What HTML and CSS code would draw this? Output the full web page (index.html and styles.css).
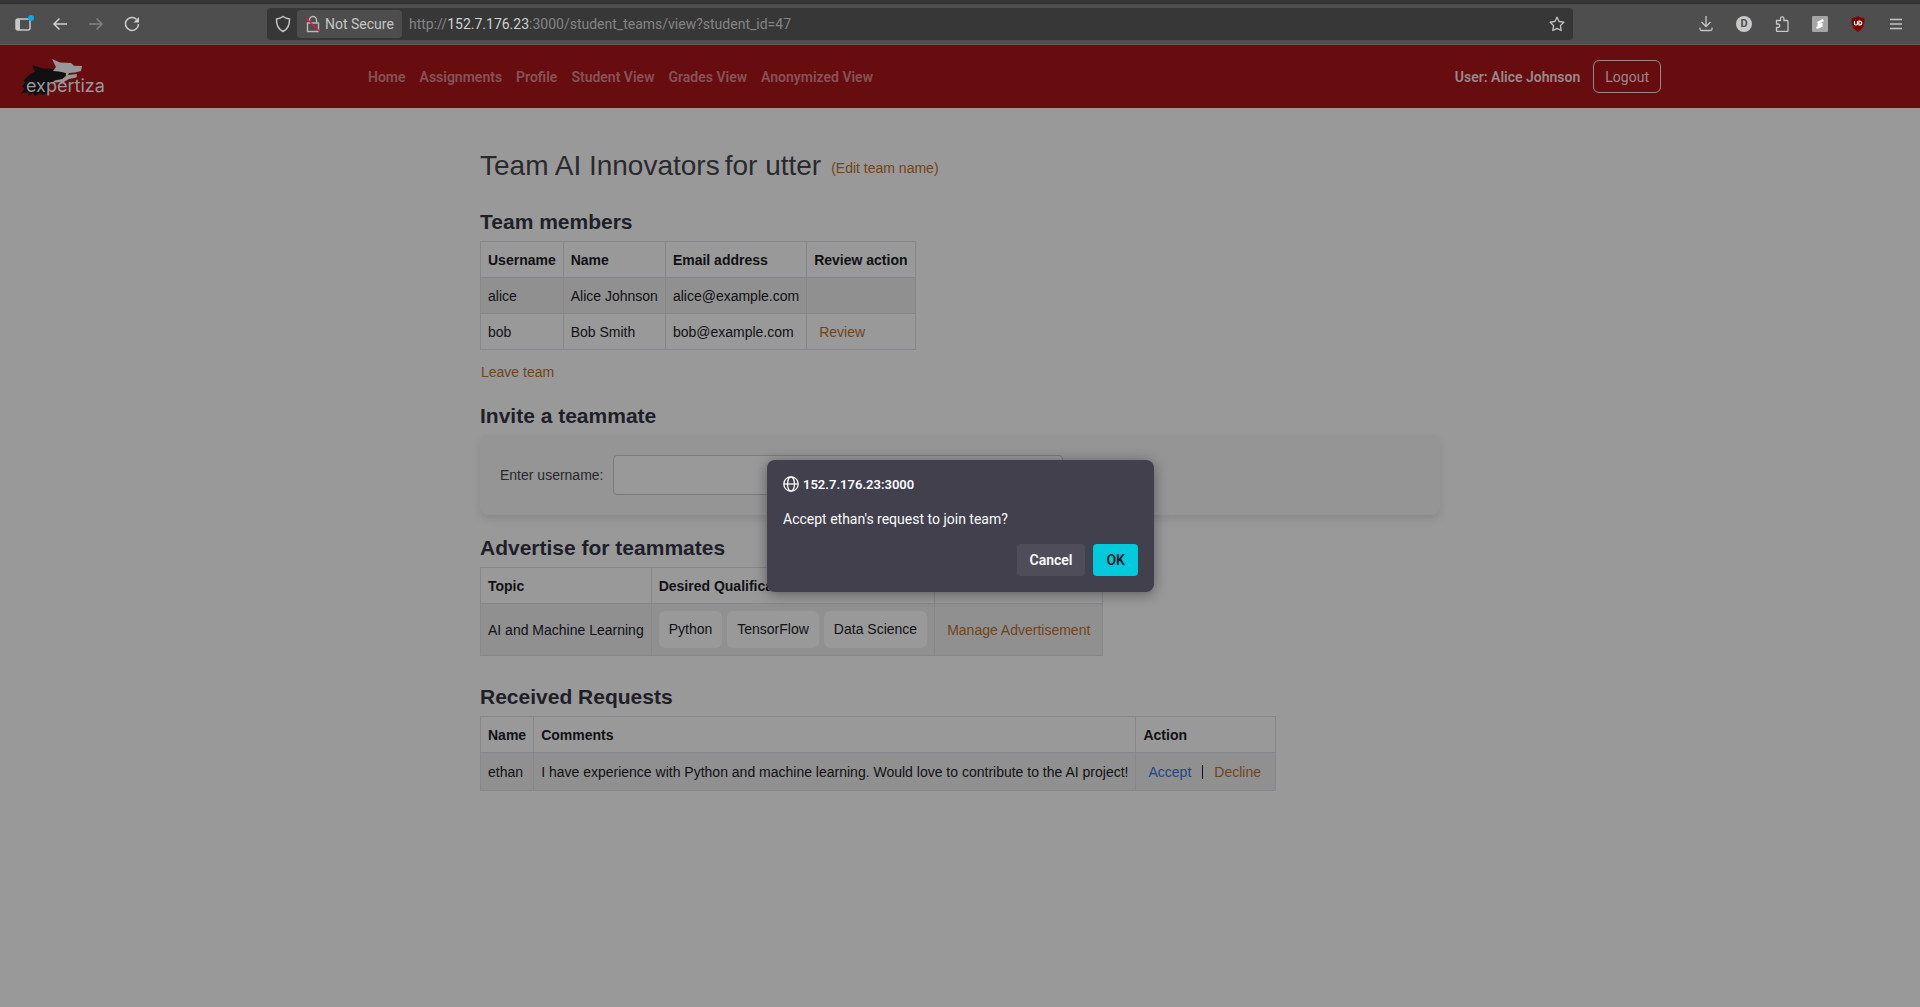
FILE: index.html
```html
<!DOCTYPE html>
<html lang="en">
<head>
    <meta charset="UTF-8">
    <meta name="viewport" content="width=device-width, initial-scale=1.0">
    <title>Expertiza</title>
    <link rel="stylesheet" href="styles.css">
</head>
<body>
    <div class="tabstrip"></div>
    <header class="toolbar">
        <div class="nav-buttons">
            <button class="icon-btn" aria-label="Sidebar">
                <svg width="20" height="20" viewBox="0 0 20 20"><rect x="2" y="5" width="14" height="11" rx="2" fill="none" stroke="#c8c8c8" stroke-width="1.500"/><path d="M2 5h4v11H2z" fill="#c8c8c8"/><circle cx="17" cy="4" r="3" fill="#00aaf5"/></svg>
            </button>
            <button class="icon-btn" aria-label="Back">
                <svg width="16" height="16" viewBox="0 0 16 16"><path d="M15 8H2M7.500 2.500L2 8l5.500 5.500" fill="none" stroke="#d2d2d2" stroke-width="1.500"/></svg>
            </button>
            <button class="icon-btn" aria-label="Forward">
                <svg width="16" height="16" viewBox="0 0 16 16"><path d="M1 8h13M8.500 2.500L14 8l-5.500 5.500" fill="none" stroke="#818181" stroke-width="1.500"/></svg>
            </button>
            <button class="icon-btn" aria-label="Reload">
                <svg width="16" height="16" viewBox="0 0 16 16"><path d="M12.500 3.200A6.500 6.500 0 1 0 14.500 8" fill="none" stroke="#cecece" stroke-width="1.500"/><path d="M15 1v5.500H9.500z" fill="#cecece"/></svg>
            </button>
        </div>
        <div class="urlbar">
            <svg width="16" height="18" viewBox="0 0 16 18"><path d="M8 1.500c2 1.500 4 2.200 6.500 2.500.300 6-1.500 10-6.500 12.500C3 14 1.200 10 1.500 4 4 3.700 6 3 8 1.500z" fill="none" stroke="#c4c4c4" stroke-width="1.500"/></svg>
            <button class="security">
                <svg width="16" height="18" viewBox="0 0 16 18"><path d="M4.500 8V5a3.500 3.500 0 0 1 7 0v3M2.500 8h11v8.500h-11z" fill="none" stroke="#b9b9b9" stroke-width="1.400"/><path d="M1 3l13.500 13.500" stroke="#e3184a" stroke-width="1.500"/></svg>
                Not Secure
            </button>
            <div class="url">http://<span>152.7.176.23</span>:3000/student_teams/view?student_id=47</div>
            <svg width="16" height="16" viewBox="0 0 16 16"><path d="M8 1.200l2.100 4.300 4.700.700-3.400 3.400.800 4.900L8 12.300l-4.200 2.200.800-4.900L1.200 6.200l4.700-.700z" fill="none" stroke="#c4c4c4" stroke-width="1.300" stroke-linejoin="round"/></svg>
        </div>
        <div class="tools">
            <button class="icon-btn" aria-label="Downloads">
                <svg width="16" height="16" viewBox="0 0 16 16"><path d="M8 0v10.500M3.500 6L8 10.500 12.500 6M2 11.500V13q0 1.500 1.500 1.500h9q1.500 0 1.500-1.500v-1.500" fill="none" stroke="#c6c6c6" stroke-width="1.300"/></svg>
            </button>
            <button class="icon-btn" aria-label="Account"><span class="account">D</span></button>
            <button class="icon-btn" aria-label="Extensions">
                <svg width="16" height="16" viewBox="0 0 16 16"><path d="M2.500 8V4.500h4V2.500a1.700 1.700 0 0 1 3.400 0v2H13q1 0 1 1v9q0 1-1 1H3.500q-1 0-1-1V11.500H4A1.700 1.700 0 0 0 4 8z" fill="none" stroke="#c6c6c6" stroke-width="1.300"/></svg>
            </button>
            <button class="icon-btn" aria-label="Scripts">
                <svg width="16" height="16" viewBox="0 0 16 16"><rect width="16" height="16" rx="1" fill="#a5a5a5"/><path d="M11.500 4L5.500 7M10.500 7.500L5.500 9.500M10.500 9.500L4.500 12" fill="none" stroke="#fff" stroke-width="2.400"/></svg>
            </button>
            <button class="icon-btn" aria-label="Ad blocker">
                <svg width="16" height="16" viewBox="0 0 16 16"><path d="M8 0c2 1.500 4 2 6.500 2.300C14.800 9 13 13 8 16 3 13 1.200 9 1.500 2.300 4 2 6 1.500 8 0z" fill="#800000" stroke="#6b3035" stroke-width=".5"/><path d="M4.500 5v2.500q0 1.500 1.500 1.500t1.500-1.500V5M9 5.200V9h.8a1.900 1.900 0 0 0 0-3.800z" fill="none" stroke="#fff" stroke-width="1.200"/></svg>
            </button>
            <button class="icon-btn" aria-label="Menu">
                <svg width="14" height="14" viewBox="0 0 14 14"><path d="M1 2.500h12M1 7h12M1 11.500h12" stroke="#c6c6c6" stroke-width="1.300"/></svg>
            </button>
        </div>
    </header>

    <nav class="navbar">
        <a href="#" class="brand">
            <svg width="66" height="40" viewBox="0 0 66 40">
                <path d="M11 6l10 3.300L34 10l11.700 4.300L42 19.500 34 21l-5 5-3.300 8.500L21 36l-2-2-5 3-2-3-5 3 1-4-8 1.500L4 29l-3-1 3-5-1.500-1.500L7 17l4-3 3-1.500z" fill="#100f12"/>
                <path d="M31 0l8 3.500L50 4l3 2.700 8 .3-1 5-6 1.500-6 .5-1 2 9-1-.5 3.500L48 20l-7 4-2-2 6-5v-3l-7-1.500-6-.5 3-4z" fill="#98989a"/>
                <path d="M31 24l3-2.500 8-1.500-3 3-5 .5z" fill="#98989a"/>
            </svg>
            <span class="brand-name">expertiza</span>
        </a>
        <div class="container">
            <div class="menu">
                <a href="#">Home</a>
                <a href="#">Assignments</a>
                <a href="#">Profile</a>
                <a href="#">Student View</a>
                <a href="#">Grades View</a>
                <a href="#">Anonymized View</a>
            </div>
            <div class="user">
                <span>User: Alice Johnson</span>
                <button class="logout">Logout</button>
            </div>
        </div>
    </nav>

    <main>
        <div class="title">
            <h1><span>Team AI Innovators</span><span>for utter</span></h1>
            <a href="#">(Edit team name)</a>
        </div>

        <section class="members">
            <h2>Team members</h2>
            <table>
                <thead>
                    <tr><th>Username</th><th>Name</th><th>Email address</th><th>Review action</th></tr>
                </thead>
                <tbody>
                    <tr><td>alice</td><td>Alice Johnson</td><td>alice@example.com</td><td></td></tr>
                    <tr><td>bob</td><td>Bob Smith</td><td>bob@example.com</td><td><a href="#" class="action">Review</a></td></tr>
                </tbody>
            </table>
            <a href="#" class="leave">Leave team</a>
        </section>

        <section class="invite">
            <h2>Invite a teammate</h2>
            <form class="invite-form">
                <label for="username">Enter username:</label>
                <input type="text" id="username">
            </form>
        </section>

        <section class="advertise">
            <h2>Advertise for teammates</h2>
            <table>
                <thead>
                    <tr><th>Topic</th><th>Desired Qualifications</th><th></th></tr>
                </thead>
                <tbody>
                    <tr>
                        <td>AI and Machine Learning</td>
                        <td><div class="tags"><span>Python</span><span>TensorFlow</span><span>Data Science</span></div></td>
                        <td><a href="#" class="action">Manage Advertisement</a></td>
                    </tr>
                </tbody>
            </table>
        </section>

        <section>
            <h2>Received Requests</h2>
            <table>
                <thead>
                    <tr><th>Name</th><th>Comments</th><th>Action</th></tr>
                </thead>
                <tbody>
                    <tr>
                        <td>ethan</td>
                        <td>I have experience with Python and machine learning. Would love to contribute to the AI project!</td>
                        <td><div class="choices"><a href="#" class="accept">Accept</a><span class="divider"></span><a href="#">Decline</a></div></td>
                    </tr>
                </tbody>
            </table>
        </section>
    </main>

    <div class="dialog" role="dialog" aria-labelledby="dialog-text">
        <div class="dialog-host">
            <svg width="16" height="16" viewBox="0 0 16 16"><g fill="none" stroke="#fbfbfe" stroke-width="1.300"><circle cx="8" cy="8" r="7.200"/><ellipse cx="8" cy="8" rx="3.500" ry="7.200"/><path d="M1 8h14"/></g></svg>
            <span>152.7.176.23:3000</span>
        </div>
        <div id="dialog-text" class="dialog-text">Accept ethan's request to join team?</div>
        <div class="dialog-buttons">
            <button class="cancel">Cancel</button>
            <button class="ok">OK</button>
        </div>
    </div>
</body>
</html>
```
FILE: styles.css
```css
* {
    box-sizing: border-box;
}
body {
    margin: 0;
    min-height: 100vh;
    background-color: #99999a;
    color: #111114;
    font-family: "Liberation Sans", Arial, sans-serif;
    font-size: 14px;
}
button {
    font: inherit;
    cursor: pointer;
}
a {
    color: #704418;
    text-decoration: none;
}
svg {
    flex-shrink: 0;
}
.tabstrip {
    height: 4px;
    background-color: #363636;
    border-bottom: 1px solid #2f2f2f;
}

/* browser toolbar */
.toolbar {
    display: flex;
    align-items: center;
    height: 41px;
    padding: 0 6px;
    background-color: #4e4e4e;
    border-bottom: 1px solid #5c5c5c;
    font-family: Roboto, sans-serif;
}
.nav-buttons {
    display: flex;
    width: 261px;
}
.icon-btn {
    display: flex;
    justify-content: center;
    align-items: center;
    width: 36px;
    height: 32px;
    padding: 0;
    background: none;
    border: none;
}
.urlbar {
    display: flex;
    align-items: center;
    flex: 1;
    height: 32px;
    padding: 0 8px;
    background-color: #373737;
    border-radius: 4px;
}
.security {
    display: flex;
    align-items: center;
    gap: 4px;
    width: 105px;
    height: 28px;
    margin: 0 7px 0 6px;
    padding: 0 8px;
    background-color: #4d4d4d;
    color: #c6c6c6;
    border: none;
    border-radius: 4px;
    white-space: nowrap;
}
.url {
    flex: 1;
    color: #858585;
}
.url span {
    color: #d0d0d0;
}
.tools {
    display: flex;
    gap: 2px;
    margin-left: 115px;
}
.account {
    width: 16px;
    height: 16px;
    border-radius: 8px;
    background-color: #c8c8c8;
    color: #4e4e4e;
    font-size: 11px;
    font-weight: bold;
    line-height: 16px;
}

/* site navigation */
.navbar {
    display: flex;
    align-items: center;
    height: 63px;
    background-color: #670d10;
    font-family: Roboto, sans-serif;
}
.brand {
    position: relative;
    width: 100px;
    height: 36px;
    padding-left: 21px;
    color: #98989a;
}
.brand-name {
    position: absolute;
    left: 26px;
    top: 16px;
    font-family: Inter, sans-serif;
    font-size: 18px;
    line-height: 22px;
}
.container {
    display: flex;
    justify-content: space-between;
    align-items: center;
    flex: 1;
    max-width: 1320px;
    margin: 0 auto;
    padding: 0 9px 0 18px;
}
.menu {
    display: flex;
    gap: 14px;
    font-weight: 600;
}
.menu a {
    color: #875257;
}
.user {
    display: flex;
    align-items: center;
    gap: 13px;
    color: #98898b;
    font-weight: 600;
}
.logout {
    height: 33px;
    padding: 0 11px;
    background: none;
    color: #98898b;
    border: 1px solid #98898b;
    border-radius: 6px;
    font-weight: normal;
}

/* page */
main {
    width: 50%;
    margin: 0 auto;
    padding-top: 38px;
}
.title {
    display: flex;
    align-items: center;
    gap: 10px;
    margin-bottom: 24px;
}
.title a {
    padding-top: 4px;
}
h1 {
    display: flex;
    gap: 5px;
    margin: 0;
    color: #2a2a2d;
    font-size: 28px;
    font-weight: normal;
    line-height: 40px;
}
h2 {
    margin: 0 0 7px;
    color: #1f1f27;
    font-size: 21px;
    line-height: 24px;
}
.members {
    margin-bottom: 22px;
}
.invite {
    margin-bottom: 21px;
}
.advertise {
    margin-bottom: 29px;
}
table {
    border-collapse: collapse;
}
th, td {
    height: 36px;
    padding: 7px;
    border: 1px solid #87878b;
    line-height: 20px;
    text-align: left;
}
tbody tr:nth-child(odd) {
    background-color: #909091;
}
.action {
    padding: 0 5px;
}
.leave {
    display: block;
    padding: 12px 1px 0;
    line-height: 20px;
}
.invite-form {
    display: flex;
    align-items: flex-start;
    gap: 9px;
    height: 80px;
    padding: 20px;
    background-color: #959596;
    border-radius: 8px;
    box-shadow: 0 4px 8px rgba(0, 0, 0, 0.1);
}
.invite-form label {
    color: #28282c;
    line-height: 40px;
}
.invite-form input {
    width: 450px;
    height: 40px;
    background-color: #99999a;
    border: 1px solid #7b7b7d;
    border-radius: 4px;
}
.tags {
    display: flex;
    gap: 5px;
}
.tags span {
    padding: 8px 10px;
    background-color: #99999a;
    border-radius: 6px;
    line-height: 21px;
}
.choices {
    display: flex;
    align-items: center;
    gap: 11px;
    padding: 2px 7px 1px 5px;
}
.choices .accept {
    color: #1c4687;
}
.divider {
    width: 1px;
    height: 14px;
    background-color: #111114;
}

/* confirm dialog */
.dialog {
    position: absolute;
    top: 460px;
    left: calc(50% - 193px);
    width: 387px;
    padding: 16px;
    background-color: #42404d;
    color: #fbfbfe;
    border-radius: 8px;
    box-shadow: 0 2px 14px rgba(0, 0, 0, 0.4);
    font-family: Roboto, sans-serif;
}
.dialog-host {
    display: flex;
    align-items: center;
    gap: 4px;
    height: 16px;
    font-size: 13px;
    font-weight: 600;
}
.dialog-text {
    margin: 17px 0 15px;
    line-height: 20px;
}
.dialog-buttons {
    display: flex;
    justify-content: flex-end;
    gap: 8px;
}
.dialog-buttons button {
    height: 32px;
    padding: 0 13px;
    border: none;
    border-radius: 4px;
    font-weight: 600;
}
.cancel {
    background-color: #4f4d5a;
    color: #fbfbfe;
}
.ok {
    background-color: #00cadb;
    color: #15141a;
}
```
